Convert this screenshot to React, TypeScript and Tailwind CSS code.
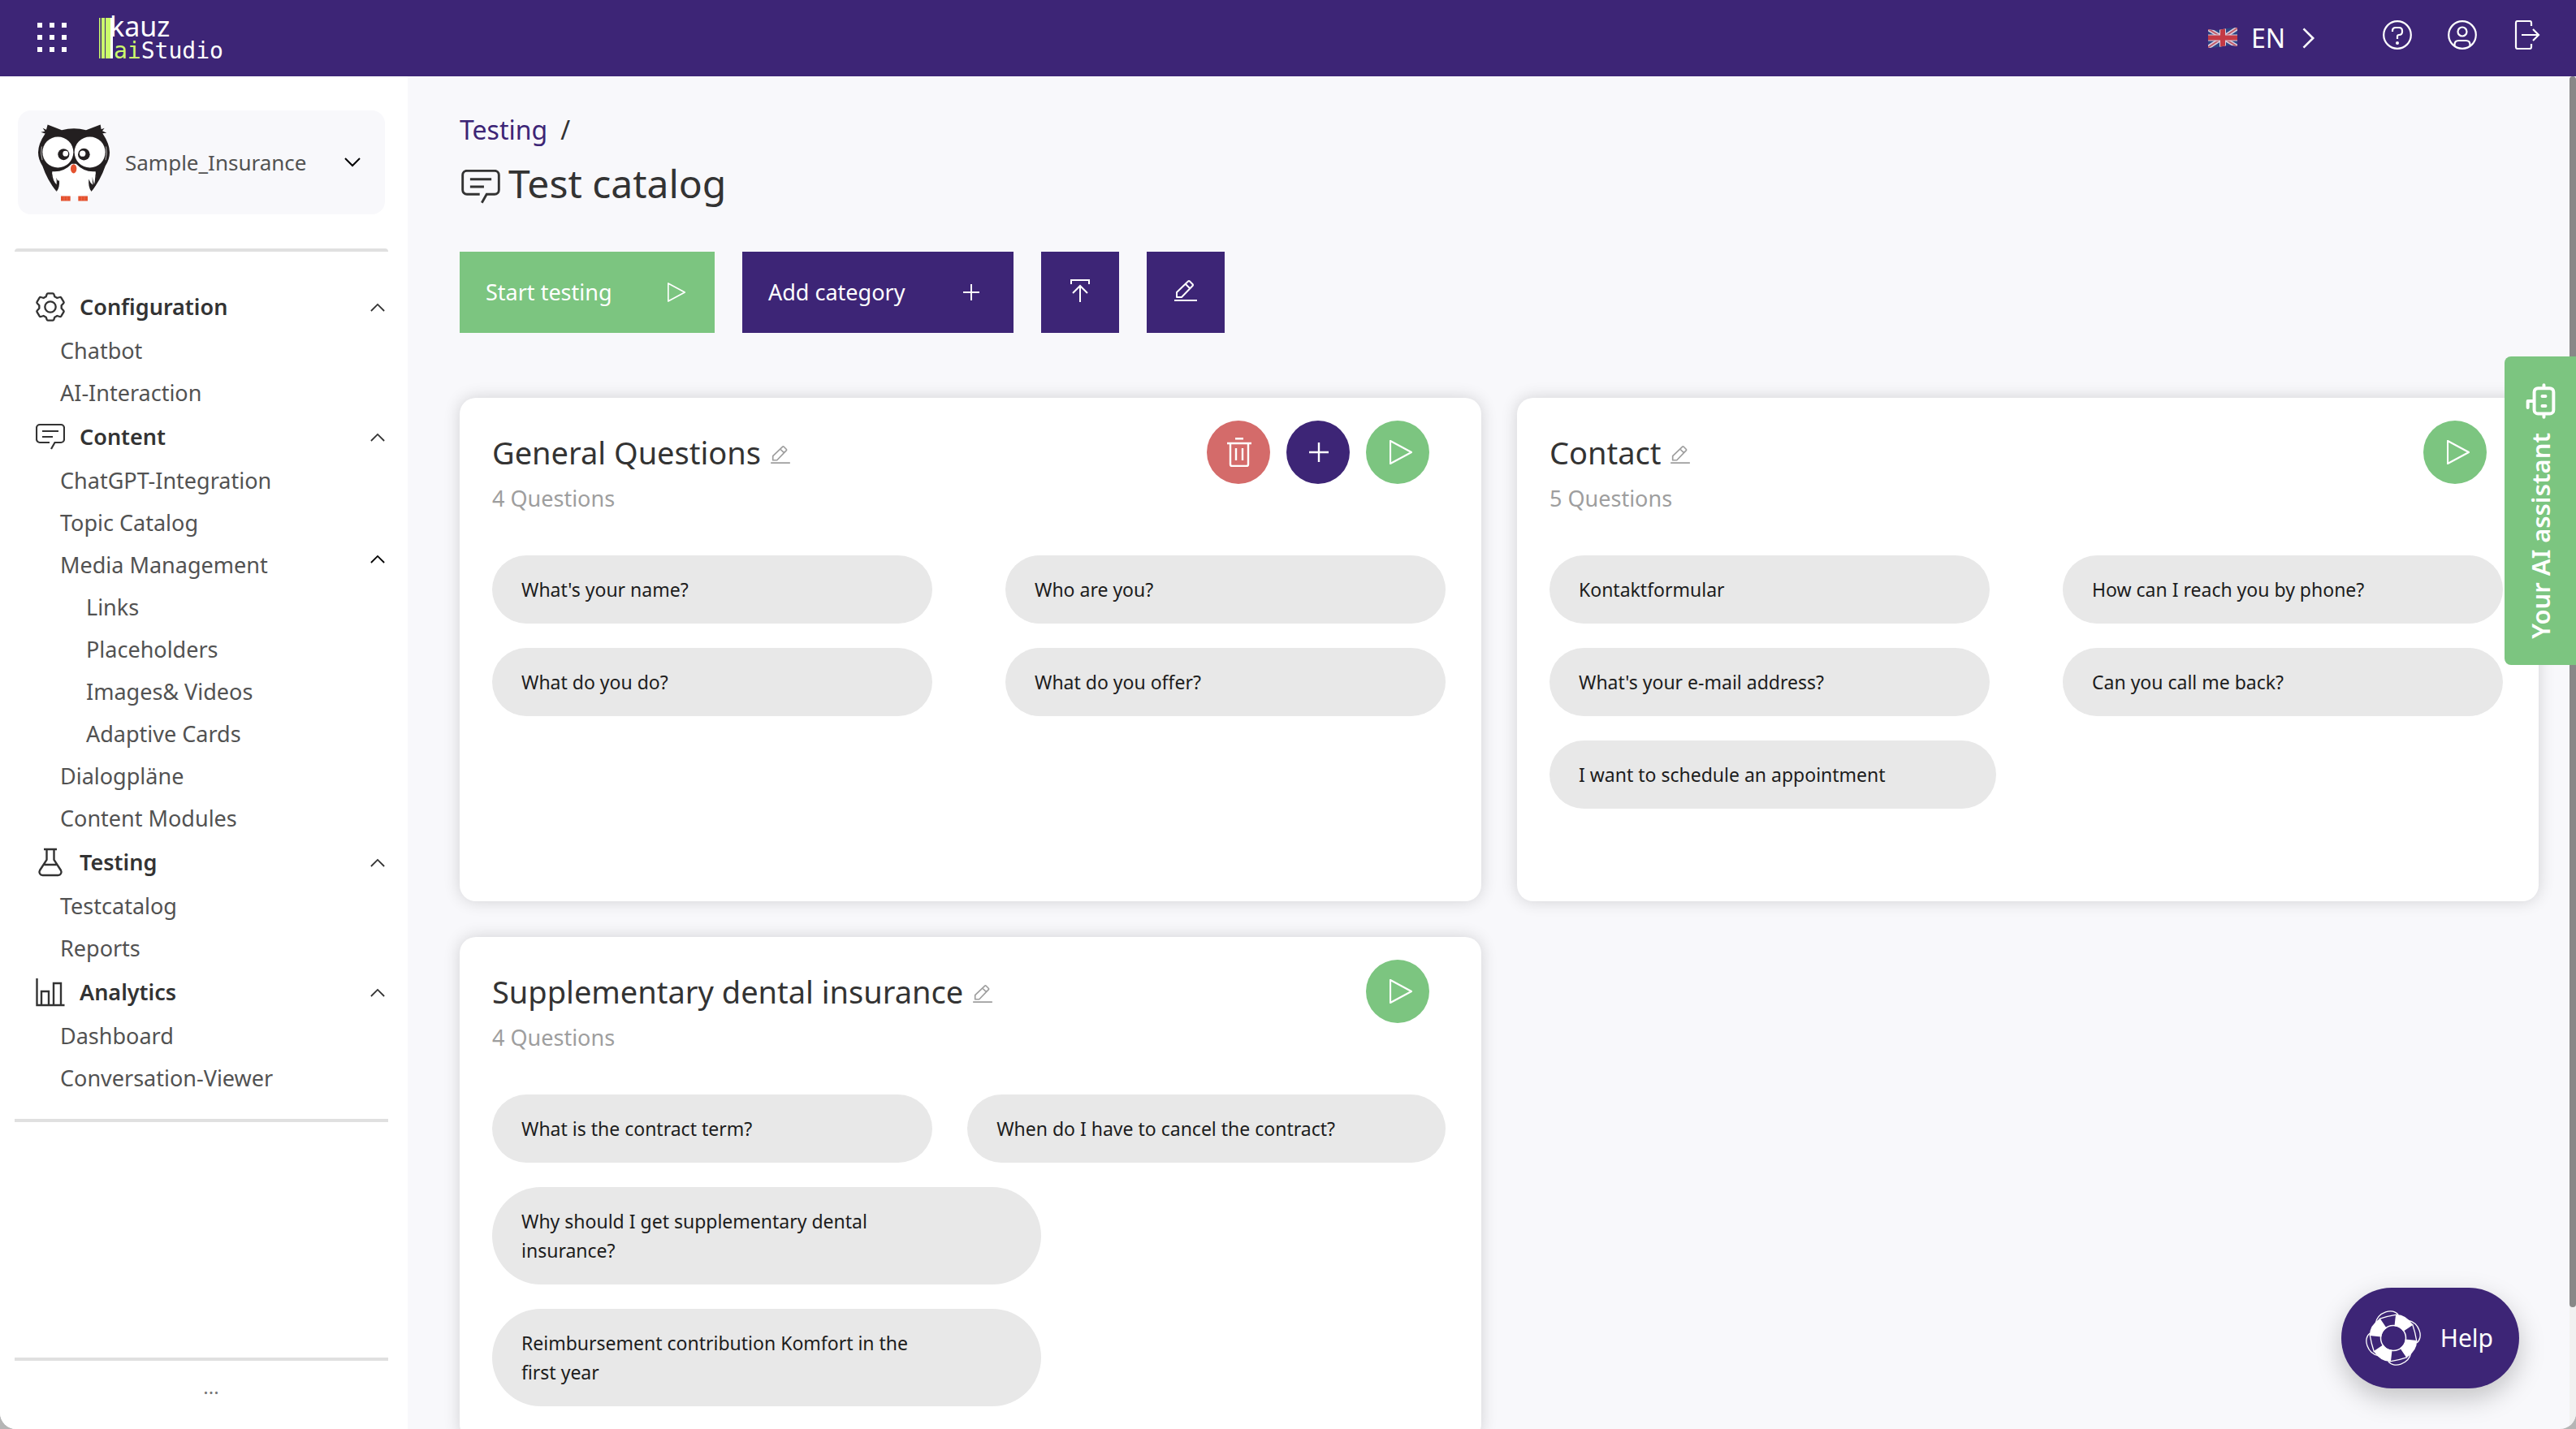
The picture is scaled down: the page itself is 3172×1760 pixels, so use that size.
import React from "react";

type IconProps = { className?: string };

function Chevron({ className = "" }: IconProps) {
  return (
    <svg viewBox="0 0 20 12" className={className} fill="none" stroke="currentColor" strokeWidth="2">
      <path d="M1 11L10 2l9 9" />
    </svg>
  );
}

function GearIcon({ className = "" }: IconProps) {
  return (
    <svg viewBox="-54 -54 108 108" className={className} fill="none" stroke="currentColor" strokeWidth="7" strokeLinejoin="round">
      <path d="M-9-50H9Q12-50 13-47L16-38 25-33 35-36Q38-37 40-34L49-19Q51-16 48-13L41-5V5L48 13Q51 16 49 19L40 34Q38 37 35 36L25 33 16 38 13 47Q12 50 9 50H-9Q-12 50-13 47L-16 38-25 33-35 36Q-38 37-40 34L-49 19Q-51 16-48 13L-41 5V-5L-48-13Q-51-16-49-19L-40-34Q-38-37-35-36L-25-33-16-38-13-47Q-12-50-9-50Z" />
      <circle r="20" />
    </svg>
  );
}

function MessageIcon({ className = "" }: IconProps) {
  return (
    <svg viewBox="0 0 36 32" className={className} fill="none" stroke="currentColor" strokeWidth="2.200">
      <path d="M17 23H5a4 4 0 0 1-4-4V5a4 4 0 0 1 4-4h26a4 4 0 0 1 4 4v14a4 4 0 0 1-4 4h-7.500L19 31M8 9h20M8 16h13" />
    </svg>
  );
}

function FlaskIcon({ className = "" }: IconProps) {
  return (
    <svg viewBox="-3 0 36 36" className={className} fill="none" stroke="currentColor" strokeWidth="2.400">
      <path d="M7 2h16M10.500 2v13L2 28a4 4 0 0 0 3.500 6h19a4 4 0 0 0 3.500-6L19.500 15V2M7.500 21h15" />
    </svg>
  );
}

function ChartIcon({ className = "" }: IconProps) {
  return (
    <svg viewBox="0 0 36 36" className={className} fill="none" stroke="currentColor" strokeWidth="2.400">
      <path d="M1.500 1v33h34M7 34V17h9v17M22 34V7h9v27" />
    </svg>
  );
}

function PlayIcon({ className = "" }: IconProps) {
  return (
    <svg viewBox="0 0 28 30" className={className} fill="none" stroke="currentColor" strokeWidth="2.200" strokeLinejoin="round">
      <path d="M1 1v28l26-14z" />
    </svg>
  );
}

function PlusIcon({ className = "" }: IconProps) {
  return (
    <svg viewBox="0 0 24 24" className={className} fill="none" stroke="currentColor" strokeWidth="2.400">
      <path d="M12 0v24M0 12h24" />
    </svg>
  );
}

function PencilIcon({ className = "" }: IconProps) {
  return (
    <svg viewBox="0 0 28 26" className={className} fill="none" stroke="currentColor" strokeWidth="2" strokeLinejoin="round">
      <path d="M0 25h28M3 21v-6L17 1.500q1-1 2 0l3.500 3.500q1 1 0 2L9 21zM14 5l5.500 5.500" />
    </svg>
  );
}

function UploadIcon({ className = "" }: IconProps) {
  return (
    <svg viewBox="0 0 24 28" className={className} fill="none" stroke="currentColor" strokeWidth="2">
      <path d="M1 6V1h22v5M12 28V8M3 17l9-9 9 9" />
    </svg>
  );
}

function TrashIcon({ className = "" }: IconProps) {
  return (
    <svg viewBox="0 0 30 36" className={className} fill="none" stroke="currentColor" strokeWidth="2.400">
      <path d="M10 1.200h10M0 7h30M4 7v26q0 2 2 2h18q2 0 2-2V7M11 13v15M19 13v15" />
    </svg>
  );
}

function OwlIcon({ className = "" }: IconProps) {
  return (
    <svg viewBox="135 455 270 290" className={className}>
      <path
        fill="#231f20"
        d="M173 459L225 479Q270 468 315 479L368 459 371 476 383 472 375 482 391 490 376 491Q402 530 402 562 402 588 386 612 368 665 335 705L205 705Q172 665 154 612 138 588 138 562 138 530 164 492L148 487 163 484 155 472 168 478Z"
      />
      <path fill="#fff" d="M190 632Q232 636 262 604H278Q308 636 350 632 357 672 332 707 318 724 270 724 222 724 208 707 183 672 190 632Z" />
      <circle cx="211" cy="561" r="57" fill="#fff" />
      <circle cx="329" cy="561" r="57" fill="#fff" />
      <path d="M151 540Q146 565 153 590M389 540Q394 565 387 590" fill="none" stroke="#fff" strokeWidth="2" />
      <circle cx="232" cy="569" r="21" fill="#231f20" />
      <circle cx="307" cy="569" r="22" fill="#231f20" />
      <circle cx="239" cy="566" r="10" fill="#fff" />
      <circle cx="302" cy="566" r="11" fill="#fff" />
      <path fill="#231f20" d="M190 640Q192 668 206 680 208 665 204 655 214 675 216 662 218 690 207 705 190 690 186 660ZM350 640Q348 668 345 680 340 665 338 652 338 670 340 682 330 675 325 660 322 690 334 705 352 690 354 660Z" />
      <ellipse cx="269" cy="622" rx="11" ry="17" fill="#e4522f" />
      <path fill="#e4522f" d="M222 723h35v18h-35zM286 723h35v18h-35z" />
      <path stroke="#f9836a" strokeWidth="1.500" d="M234 725v14M245 725v14M298 725v14M309 725v14" />
    </svg>
  );
}

function Logo({ className = "" }: IconProps) {
  return (
    <svg viewBox="0 0 156 54" className={className} role="img" aria-label="kauz aiStudio">
      <path fill="#cbfb6c" d="M0 2h1.500v50H0zM3 2h4v50H3zM8 2h6v50H8z" />
      <path fill="#fff" d="M14 2h3v50h-3z" />
      <text x="13" y="25" fontSize="34" fill="#fff" className="font-['Noto_Sans']">kauz</text>
      <text x="18" y="52" fontSize="28" fill="#fff" className="font-['DejaVu_Sans_Mono']">
        <tspan fill="#cbfb6c">ai</tspan>Studio
      </text>
    </svg>
  );
}

function FlagIcon({ className = "" }: IconProps) {
  return (
    <svg viewBox="0 0 38 28" className={className}>
      <clipPath id="flag-shape">
        <path d="M1 3Q10 5 19 3T37 1V24Q28 22 19 24T1 26Z" />
      </clipPath>
      <g clipPath="url(#flag-shape)">
        <path fill="#2d4585" d="M0 0h38v28H0z" />
        <path stroke="#d9cfe0" strokeWidth="5" d="M0 2l38 23M0 26L38 1" />
        <path stroke="#c05a68" strokeWidth="2" d="M0 2l38 23M0 26L38 1" />
        <path stroke="#d9cfe0" strokeWidth="8" d="M19 0v28M0 13.500h38" />
        <path stroke="#c43a45" strokeWidth="6" d="M19 0v28M0 13.500h38" />
      </g>
    </svg>
  );
}

function BotIcon({ className = "" }: IconProps) {
  return (
    <svg viewBox="748 156 112 138" className={className} fill="none" stroke="currentColor" strokeWidth="12" strokeLinecap="round" strokeLinejoin="round">
      <rect x="780" y="177" width="72" height="95" rx="14" />
      <path d="M810 207h12M810 243h12M816 165v6M816 278v7M774 225H756v24" />
    </svg>
  );
}

function LifebuoyIcon({ className = "" }: IconProps) {
  return (
    <svg viewBox="-34 -34 68 68" className={className}>
      <circle r="15.500" fill="none" stroke="#fff" strokeWidth="1.500" />
      {[-14, 76, 166, 256].map((angle) => (
        <g key={angle} transform={`rotate(${angle})`}>
          <path fill="#fff" d="M5-14L10-27.500Q22-25 27.500-10L14-5A15 15 0 0 0 5-14Z" />
          <path fill="none" stroke="#fff" strokeWidth="1.300" d="M-11-27Q0-28 11-27M-17-22.500C-11-36 9-37 13-26" />
        </g>
      ))}
    </svg>
  );
}

type NavItem = { label: string; nested?: boolean; expandable?: boolean };
type NavSection = { title: string; icon: (p: IconProps) => React.ReactElement; items: NavItem[] };

const sections: NavSection[] = [
  { title: "Configuration", icon: GearIcon, items: [{ label: "Chatbot" }, { label: "AI-Interaction" }] },
  {
    title: "Content",
    icon: MessageIcon,
    items: [
      { label: "ChatGPT-Integration" },
      { label: "Topic Catalog" },
      { label: "Media Management", expandable: true },
      { label: "Links", nested: true },
      { label: "Placeholders", nested: true },
      { label: "Images& Videos", nested: true },
      { label: "Adaptive Cards", nested: true },
      { label: "Dialogpläne" },
      { label: "Content Modules" },
    ],
  },
  { title: "Testing", icon: FlaskIcon, items: [{ label: "Testcatalog" }, { label: "Reports" }] },
  { title: "Analytics", icon: ChartIcon, items: [{ label: "Dashboard" }, { label: "Conversation-Viewer" }] },
];

const categories = [
  {
    title: "General Questions",
    editable: true,
    questions: ["What's your name?", "Who are you?", "What do you do?", "What do you offer?"],
  },
  {
    title: "Contact",
    editable: false,
    questions: [
      "Kontaktformular",
      "How can I reach you by phone?",
      "What's your e-mail address?",
      "Can you call me back?",
      "I want to schedule an appointment",
    ],
  },
  {
    title: "Supplementary dental insurance",
    editable: false,
    questions: [
      "What is the contract term?",
      "When do I have to cancel the contract?",
      "Why should I get supplementary dental insurance?",
      "Reimbursement contribution Komfort in the first year",
    ],
  },
];

function Header() {
  return (
    <header className="flex h-[94px] shrink-0 items-center justify-between bg-[#3d2576] pl-[46px] pr-[42px] text-white">
      <div className="flex items-center gap-10">
        <button type="button" aria-label="Apps" className="grid grid-cols-3 gap-[9px] pb-0.5">
          {Array.from({ length: 9 }, (_, i) => (
            <span key={i} className="size-1.5 bg-white" />
          ))}
        </button>
        <Logo className="h-[54px] w-[156px] overflow-visible" />
      </div>
      <div className="flex items-center">
        <button type="button" className="flex items-center text-[32px] leading-10">
          <FlagIcon className="mr-4 h-7 w-[38px]" />
          EN
          <Chevron className="ml-4 h-4 w-[26px] rotate-90" />
        </button>
        <div className="ml-[78px] flex items-center gap-11 pb-2">
          <button type="button" aria-label="Help">
            <svg viewBox="0 0 36 36" className="size-9" fill="none" stroke="currentColor" strokeWidth="2.200">
              <circle cx="18" cy="18" r="16.800" />
              <path d="M12 14v-1q0-4 4-4h4q4 0 4 4v1q0 4-4 4-2 0-2 2v3" />
              <circle cx="18" cy="28" r="2" fill="currentColor" stroke="none" />
            </svg>
          </button>
          <button type="button" aria-label="Account">
            <svg viewBox="0 0 36 36" className="size-9" fill="none" stroke="currentColor" strokeWidth="2.200">
              <circle cx="18" cy="18" r="16.800" />
              <circle cx="18" cy="14" r="5.500" />
              <path d="M8.500 32v-2q0-5 5-5h9q5 0 5 5v2" />
            </svg>
          </button>
          <button type="button" aria-label="Log out">
            <svg viewBox="0 0 36 36" className="size-9" fill="none" stroke="currentColor" strokeWidth="2.200">
              <path d="M23 7V3q0-2-2-2H6Q4 1 4 3v30q0 2 2 2h15q2 0 2-2v-4M11 18h21M25 11l7 7-7 7" />
            </svg>
          </button>
        </div>
      </div>
    </header>
  );
}

function Sidebar() {
  return (
    <aside className="flex w-[502px] shrink-0 flex-col bg-white pl-[18px] pr-6 pt-[42px]">
      <button type="button" className="mx-1 flex h-32 items-center rounded-2xl bg-[#f8f8fb] pl-6 pr-[30px] text-[#525252]">
        <OwlIcon className="h-[97px] w-[90px]" />
        <span className="ml-[18px] flex-1 text-left text-[26px] leading-10">Sample_Insurance</span>
        <Chevron className="h-3 w-5 rotate-180 text-black" />
      </button>
      <hr className="mt-[42px] h-1 rounded-t border-0 bg-[#e0e0e0]" />
      <nav className="mt-10 pl-[26px] pr-1">
        {sections.map(({ title, icon: Icon, items }) => (
          <section key={title}>
            <button type="button" className="flex h-14 w-full items-center text-[#333]">
              <Icon className="size-9" />
              <span className="ml-[18px] flex-1 text-left text-[27px] leading-10 font-semibold">{title}</span>
              <Chevron className="h-[11px] w-[18px]" />
            </button>
            <ul>
              {items.map((item) => (
                <li key={item.label} className="flex items-center justify-between">
                  <a
                    href="#"
                    className={
                      item.nested
                        ? "block pl-[62px] text-[27px] leading-[52px] text-[#525252]"
                        : "block pl-[30px] text-[27px] leading-[52px] text-[#525252]"
                    }
                  >
                    {item.label}
                  </a>
                  {item.expandable && (
                    <button type="button" aria-label={`Collapse ${item.label}`} className="pb-4 text-black">
                      <Chevron className="h-[11px] w-[18px]" />
                    </button>
                  )}
                </li>
              ))}
            </ul>
          </section>
        ))}
      </nav>
      <hr className="mt-6 h-1 border-0 bg-[#e0e0e0]" />
      <hr className="mt-auto h-1 border-0 bg-[#e0e0e0]" />
      <p className="h-[84px] pl-6 pt-4 text-center text-2xl text-[#777]">...</p>
    </aside>
  );
}

function CategoryCard({ title, editable, questions }: (typeof categories)[number]) {
  return (
    <article className="min-h-[620px] rounded-[20px] bg-white px-10 pb-10 pt-7 shadow-[0_0_20px_rgba(0,0,0,0.16)]">
      <div className="flex h-[78px] items-center justify-between pr-6">
        <h2 className="flex items-center gap-3 text-[38px] leading-[52px] text-[#333]">
          {title}
          <button type="button" aria-label={`Rename ${title}`} className="pt-1.5 text-[#9e9e9e]">
            <PencilIcon className="h-[22px] w-6" />
          </button>
        </h2>
        <div className="flex gap-5 text-white">
          {editable && (
            <>
              <button type="button" aria-label="Delete category" className="flex size-[78px] items-center justify-center rounded-full bg-[#d46b6a] pl-0.5">
                <TrashIcon className="h-9 w-[30px]" />
              </button>
              <button type="button" aria-label="Add question" className="flex size-[78px] items-center justify-center rounded-full bg-[#3d2576] pl-0.5">
                <PlusIcon className="size-6" />
              </button>
            </>
          )}
          <button type="button" aria-label="Run tests" className="flex size-[78px] items-center justify-center rounded-full bg-[#7cc580] pl-2">
            <PlayIcon className="h-[30px] w-7" />
          </button>
        </div>
      </div>
      <p className="text-[27px] leading-9 text-[#9e9e9e]">{questions.length} Questions</p>
      <ul className="mt-[52px] mr-1 flex flex-wrap justify-between gap-y-[30px]">
        {questions.map((question) => (
          <li
            key={question}
            className="min-w-[542px] max-w-[676px] rounded-[60px] bg-[#e8e8e8] py-6 pl-9 pr-[136px] text-[23px] leading-9 text-[#1c1c1c]"
          >
            {question}
          </li>
        ))}
      </ul>
    </article>
  );
}

export default function App() {
  return (
    <div className="h-screen bg-[#b5b5b5] font-['Noto_Sans',sans-serif]">
      <div className="relative flex h-full flex-col overflow-hidden rounded-b-[20px] bg-[#f8f8fb]">
        <Header />
        <div className="relative flex min-h-0 flex-1">
          <Sidebar />
          <main className="min-w-0 flex-1 overflow-hidden pl-16 pr-[46px] pt-11">
            <nav aria-label="Breadcrumb" className="flex gap-4 text-[32px] leading-[44px] text-[#333]">
              <a href="#" className="text-[#3d2576]">Testing</a>
              <span>/</span>
            </nav>
            <h1 className="mt-3 flex items-center gap-2.5 pl-0.5 text-[48px] leading-[64px] text-[#333]">
              <MessageIcon className="mt-2 h-[42px] w-12" />
              Test catalog
            </h1>
            <div className="mt-[52px] flex gap-[34px] text-[27px] leading-9 text-white">
              <button type="button" className="flex h-[100px] w-[314px] items-center justify-between bg-[#7cc580] pl-8 pr-9">
                Start testing
                <PlayIcon className="h-6 w-[22px]" />
              </button>
              <button type="button" className="flex h-[100px] w-[334px] items-center justify-between bg-[#3d2576] pl-8 pr-[42px]">
                Add category
                <PlusIcon className="size-5" />
              </button>
              <button type="button" aria-label="Upload" className="flex h-[100px] w-24 items-center justify-center bg-[#3d2576] pb-1">
                <UploadIcon className="h-7 w-6" />
              </button>
              <button type="button" aria-label="Edit" className="flex h-[100px] w-24 items-center justify-center bg-[#3d2576] pb-1">
                <PencilIcon className="h-[26px] w-7" />
              </button>
            </div>
            <div className="mt-20 grid grid-cols-2 gap-11">
              {categories.map((category) => (
                <CategoryCard key={category.title} {...category} />
              ))}
            </div>
          </main>
          <div className="absolute inset-y-0 right-0 w-2 bg-[#f1f1f1]">
            <div className="h-[91%] rounded-full bg-[#888]" />
          </div>
          <button
            type="button"
            className="absolute right-0 top-[345px] flex h-[380px] w-[88px] flex-col items-center justify-center gap-4 rounded-l-lg bg-[#7cc580] text-[31px] leading-10 font-semibold text-white"
          >
            <BotIcon className="h-[46px] w-[37px]" />
            <span className="rotate-180 [writing-mode:vertical-rl]">Your AI assistant</span>
          </button>
          <button
            type="button"
            className="absolute bottom-[50px] right-[70px] flex h-[124px] items-center gap-6 rounded-full bg-[#3d2576] pl-[30px] pr-8 text-[30px] leading-10 text-white shadow-[0_12px_32px_rgba(0,0,0,0.22)]"
          >
            <LifebuoyIcon className="size-[68px]" />
            Help
          </button>
        </div>
      </div>
    </div>
  );
}
